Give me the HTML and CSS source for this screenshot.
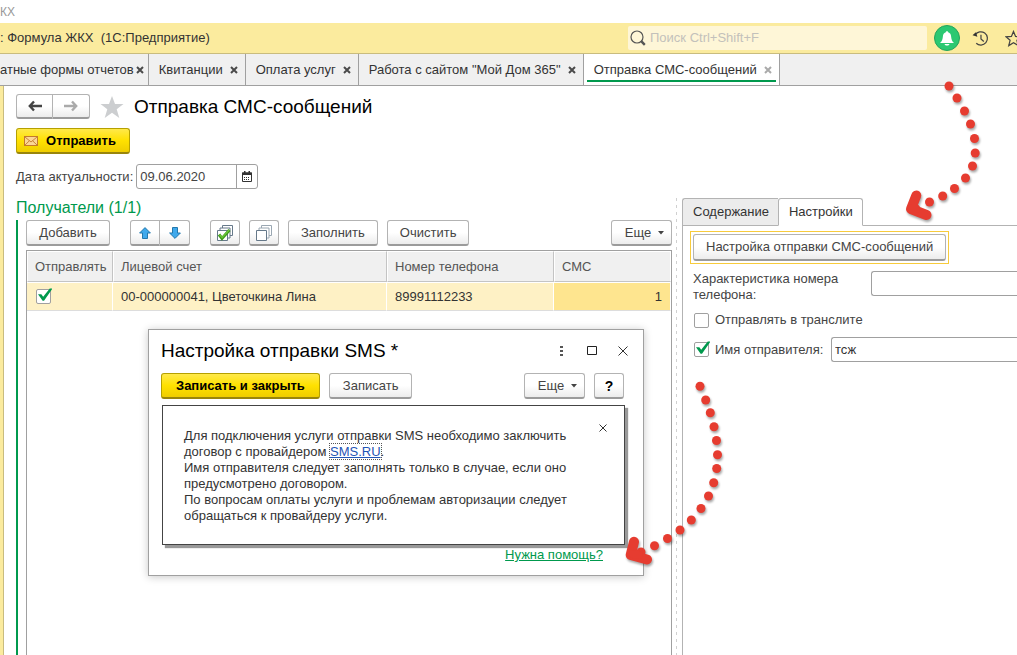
FILE: index.html
```html
<!DOCTYPE html>
<html lang="ru">
<head>
<meta charset="utf-8">
<title>Отправка СМС-сообщений</title>
<link rel="stylesheet" href="styles.css">
</head>
<body>
<svg class="defs" aria-hidden="true">
  <symbol id="cross" viewBox="0 0 8 8"><path d="M1 1l6 6M7 1l-6 6" fill="none" stroke="currentColor" stroke-width="2"/></symbol>
  <symbol id="caret" viewBox="0 0 6 4"><path d="M0 0h6L3 3.4z" fill="currentColor"/></symbol>
</svg>

<div class="window-title"><span>КХ</span></div>

<header class="appbar">
  <span class="app-name">: Формула ЖКХ&nbsp; (1С:Предприятие)</span>
  <label class="search">
    <svg class="search-icon" viewBox="0 0 16 16" fill="none" stroke="#555"><circle cx="7" cy="7" r="6" stroke-width="1.2"/><path d="M11.2 11.2l3.6 3.6" stroke-width="2.4"/></svg>
    <input type="search" placeholder="Поиск Ctrl+Shift+F" aria-label="Поиск">
  </label>
  <button class="round bell" aria-label="Уведомления">
    <svg viewBox="0 0 26 26"><circle cx="13" cy="13" r="12.5" fill="#2bc871" stroke="#23a35c"/><path d="M13 6.200c.8 0 1.200.5 1.200 1.100 2 .6 2.700 2.200 2.900 4.200.3 3.200.9 4.700 2.900 6.500H6c2-1.800 2.600-3.300 2.900-6.500.2-2 .9-3.600 2.900-4.200 0-.6.4-1.100 1.200-1.100zM10.500 19h5c-.4 1-1.300 1.600-2.500 1.600s-2.100-.6-2.500-1.600z" fill="#fff"/></svg>
  </button>
  <button class="round history" aria-label="История">
    <svg viewBox="0 0 18 18" fill="none" stroke="#444" stroke-width="1.300"><path d="M3.400 5.200A7 7 0 1 1 4.500 14M9.500 5v4.500l3 2.600"/><path d="M.6 5.500l5.200 1.600L4 2.500z" fill="#333" stroke="none"/></svg>
  </button>
  <button class="round favorites" aria-label="Избранное">
    <svg viewBox="0 0 18 18" fill="none" stroke="#444" stroke-width="1.300"><path d="M9 1.500l2.200 5.300 5.800.4-4.400 3.700 1.400 5.600L9 13.400l-5 3.100 1.400-5.600L1 7.200l5.800-.4z"/></svg>
  </button>
</header>

<nav class="tabs">
  <div class="tab first"><a href="#">атные формы отчетов</a><button aria-label="Закрыть"><svg><use href="#cross"/></svg></button></div>
  <div class="tab"><a href="#">Квитанции</a><button aria-label="Закрыть"><svg><use href="#cross"/></svg></button></div>
  <div class="tab"><a href="#">Оплата услуг</a><button aria-label="Закрыть"><svg><use href="#cross"/></svg></button></div>
  <div class="tab"><a href="#">Работа с сайтом "Мой Дом 365"</a><button aria-label="Закрыть"><svg><use href="#cross"/></svg></button></div>
  <div class="tab active"><a href="#">Отправка СМС-сообщений</a><button aria-label="Закрыть"><svg><use href="#cross"/></svg></button></div>
</nav>

<main class="form">
  <div class="form-head">
    <div class="joined nav-buttons">
      <button class="btn" aria-label="Назад"><svg viewBox="0 0 14 12"><path d="M6 1.500L1.800 6 6 10.500M2 6h12" fill="none" stroke="#444" stroke-width="2.400"/></svg></button>
      <button class="btn" aria-label="Вперед"><svg viewBox="0 0 14 12"><path d="M8 1.500l4.200 4.500L8 10.500M12 6H0" fill="none" stroke="#aaa" stroke-width="2.400"/></svg></button>
    </div>
    <svg class="star" viewBox="0 0 24 22"><path d="M12 0l3 8h8.500l-6.800 5.200L19.300 22 12 16.700 4.700 22l2.600-8.800L.5 8H9z" fill="#ccced0"/></svg>
    <h1>Отправка СМС-сообщений</h1>
  </div>

  <button class="btn primary send">
    <svg viewBox="0 0 14 10"><rect x=".5" y=".5" width="13" height="9" fill="#fbd695" stroke="#c47a2c"/><path d="M1 1l6 5 6-5M1 9l4.500-4.300M13 9L8.500 4.700" fill="none" stroke="#c98539"/></svg>
    Отправить
  </button>

  <div class="date-row">
    <label for="date">Дата актуальности:</label>
    <div class="date-box">
      <input id="date" type="text" value="09.06.2020">
      <button aria-label="Выбрать дату"><svg viewBox="0 0 10 11"><path d="M.5 2h9v8.500h-9z" fill="#fff" stroke="#333"/><path d="M0 1.500h10V4H0zM2 0h1.500v2H2zM6.500 0H8v2H6.500z" fill="#333"/><path d="M2 6.500h6M2 8.500h6" stroke="#333" stroke-dasharray="1 1"/></svg></button>
    </div>
  </div>

  <div class="split">
    <section class="recipients">
      <h2>Получатели (1/1)</h2>
      <div class="group">
        <div class="toolbar">
          <button class="btn add">Добавить</button>
          <div class="joined move">
            <button class="btn" aria-label="Вверх"><svg viewBox="0 0 12 12"><path d="M6 .6L11.400 6H8.500v5.500h-5V6H.6z" fill="#3fa9ec" stroke="#2378ad"/></svg></button>
            <button class="btn" aria-label="Вниз"><svg viewBox="0 0 12 12"><path d="M6 11.400L.6 6h2.900V.5h5V6h2.900z" fill="#3fa9ec" stroke="#2378ad"/></svg></button>
          </div>
          <button class="btn square check-all" aria-label="Отметить все"><svg viewBox="0 0 16 16"><g fill="#fff" stroke="#66798a"><path d="M5.500.5h10v10h-10z"/><path d="M3 3h10v10H3z"/><path d="M.5 5.500h10v10H.5z"/></g><path d="M2 9.500l3 4L12.500 5" fill="none" stroke="#3f9a1b" stroke-width="3"/><path d="M2.500 9.700l2.600 3L12 5" fill="none" stroke="#6cc93a" stroke-width="1.200"/></svg></button>
          <button class="btn square" aria-label="Снять отметки"><svg viewBox="0 0 16 16"><g fill="#fff" stroke="#66798a"><path d="M5.500.5h10v10h-10z" stroke="#9aa7b2"/><path d="M3 3h10v10H3z" stroke="#9aa7b2"/><path d="M.5 5.500h10v10H.5z"/></g></svg></button>
          <button class="btn">Заполнить</button>
          <button class="btn">Очистить</button>
          <button class="btn more">Еще <svg><use href="#caret"/></svg></button>
        </div>
        <div class="grid">
          <table>
            <colgroup><col class="c-send"><col class="c-account"><col class="c-phone"><col></colgroup>
            <thead><tr><th>Отправлять</th><th>Лицевой счет</th><th>Номер телефона</th><th>СМС</th></tr></thead>
            <tbody><tr>
              <td><input type="checkbox" checked aria-label="Отправлять"></td>
              <td>00-000000041, Цветочкина Лина</td>
              <td>89991112233</td>
              <td class="num">1</td>
            </tr></tbody>
          </table>
        </div>
      </div>
    </section>

    <div class="splitter"></div>

    <section class="side">
      <div class="side-tabs">
        <button>Содержание</button>
        <button class="current">Настройки</button>
      </div>
      <div class="side-body">
        <div class="focus"><button class="btn">Настройка отправки СМС-сообщений</button></div>
        <div class="field phone-kind">
          <label for="kind">Характеристика номера телефона:</label>
          <input id="kind" type="text">
        </div>
        <label class="check-row"><input type="checkbox">Отправлять в транслите</label>
        <div class="field sender">
          <label class="check-row"><input type="checkbox" checked>Имя отправителя:</label>
          <input type="text" value="тсж" aria-label="Имя отправителя">
        </div>
      </div>
    </section>
  </div>
</main>

<div class="dialog" role="dialog" aria-labelledby="dialog-title">
  <div class="dialog-head">
    <h2 id="dialog-title">Настройка отправки SMS *</h2>
    <button aria-label="Меню"><svg viewBox="0 0 12 12"><path d="M5 1h3v2H5zM5 5h3v2H5zM5 9h3v2H5z" fill="#555"/></svg></button>
    <button aria-label="Развернуть"><svg viewBox="0 0 12 12"><path d="M1.500 1.500h9v8h-9z" fill="none" stroke="#222"/></svg></button>
    <button aria-label="Закрыть окно"><svg viewBox="0 0 12 12"><path d="M1.500 1.500l9 9M10.500 1.500l-9 9" fill="none" stroke="#333"/></svg></button>
  </div>
  <div class="dialog-bar">
    <button class="btn primary">Записать и закрыть</button>
    <button class="btn">Записать</button>
    <button class="btn more">Еще <svg><use href="#caret"/></svg></button>
    <button class="btn help">?</button>
  </div>
  <div class="note">
    <p>Для подключения услуги отправки SMS необходимо заключить<br>договор с провайдером <a href="#">SMS.RU</a>.<br>Имя отправителя следует заполнять только в случае, если оно<br>предусмотрено договором.<br>По вопросам оплаты услуги и проблемам авторизации следует<br>обращаться к провайдеру услуги.</p>
    <button aria-label="Закрыть подсказку"><svg viewBox="0 0 8 8"><path d="M.5.5l7 7M7.500.5l-7 7" fill="none" stroke="#333"/></svg></button>
  </div>
  <a class="help-link" href="#">Нужна помощь?</a>
</div>

<svg class="pointers" viewBox="0 0 1017 655" aria-hidden="true">
  <g class="dots">
    <circle cx="949" cy="86" r="4.500"/><circle cx="957" cy="98" r="4.500"/><circle cx="964.500" cy="111" r="4.500"/><circle cx="970.500" cy="124" r="4.500"/><circle cx="974.500" cy="138.500" r="4.500"/><circle cx="975.200" cy="153" r="4.500"/><circle cx="972.500" cy="166" r="4.500"/><circle cx="965.500" cy="178" r="4.500"/><circle cx="954.500" cy="188.500" r="4.500"/><circle cx="942.700" cy="196" r="4.500"/><circle cx="929.500" cy="202" r="4.500"/>
    <path d="M916.300 195.500L911 209l15.500 6"/><path class="tip" d="M912 208.500l4 0"/>
    <circle cx="700" cy="386.300" r="4.500"/><circle cx="705.700" cy="400" r="4.500"/><circle cx="710.300" cy="412.700" r="4.500"/><circle cx="714" cy="426.700" r="4.500"/><circle cx="716.500" cy="440.500" r="4.500"/><circle cx="717.500" cy="454.700" r="4.500"/><circle cx="716.700" cy="468.500" r="4.500"/><circle cx="713.700" cy="482.700" r="4.500"/><circle cx="708.500" cy="496" r="4.500"/><circle cx="701" cy="508.500" r="4.500"/><circle cx="691.300" cy="520" r="4.500"/><circle cx="680" cy="530" r="4.500"/><circle cx="667.500" cy="538.500" r="4.500"/><circle cx="654.500" cy="545.700" r="4.500"/><circle cx="641" cy="552" r="4.500"/>
    <path d="M634 541.800l-3.300 13.200 16.300 4.500"/><path class="tip" d="M633 554l6 1"/>
  </g>
</svg>
</body>
</html>
```
FILE: styles.css
```css
* { box-sizing: border-box; }

body {
  margin: 0;
  min-height: 100vh;
  display: flex;
  flex-direction: column;
  position: relative;
  overflow: hidden;
  background: #fff;
  color: #333;
  font: 13px/16px "Liberation Sans", Arial, sans-serif;
}

button, input { font: inherit; color: inherit; margin: 0; }
button { padding: 0; border: 0; background: none; }
svg { display: block; flex: none; }
h1, h2, p { margin: 0; font-weight: normal; }
.defs { width: 0; height: 0; position: absolute; }

.window-title {
  height: 23px;
  display: flex;
  align-items: center;
  color: #999;
  font-size: 12px;
}

/* Application bar */
.appbar {
  height: 31px;
  display: flex;
  align-items: center;
  background: #fbeb9e;
  border-bottom: 1px solid #c9bc7e;
  overflow: hidden;
}
.app-name { flex: 1; white-space: nowrap; }
.search {
  width: 299px;
  height: 24px;
  display: flex;
  align-items: center;
  gap: 4px;
  padding-left: 2px;
  background: #fef6d7;
  border-radius: 2px;
}
.search-icon { width: 16px; height: 16px; }
.search input { flex: 1; min-width: 0; border: 0; padding: 0; background: none; outline: 0; }
.search input::placeholder { color: #c3c1bb; opacity: 1; }
.round { flex: none; }
.bell { margin-left: 7px; }
.bell svg { width: 26px; height: 26px; }
.history { margin-left: 12px; }
.favorites { margin: 0 -5px 0 16px; }
.history svg, .favorites svg { width: 17px; height: 17px; }

/* Open windows */
.tabs {
  height: 32px;
  display: flex;
  background: #f0f0f0;
  border-bottom: 1px solid #a0a0a0;
}
.tab {
  display: flex;
  align-items: center;
  gap: 7px;
  padding: 0 7px 0 10px;
  border-right: 1px solid #a0a0a0;
  white-space: nowrap;
}
.tab.first { padding: 0 4px 0 0; gap: 2px; }
.tab a { color: inherit; text-decoration: none; }
.tab svg { width: 8px; height: 8px; color: #4a4a4a; }
.tab.active { background: linear-gradient(#00994d, #00994d) center 26px / calc(100% - 6px) 2px no-repeat #fff; }
.tab.active svg { color: #aaa; }

/* Buttons */
.btn {
  height: 26px;
  padding: 0 13px;
  display: inline-flex;
  align-items: center;
  justify-content: center;
  border: 1px solid #b3b3b3;
  border-bottom: 2px solid #9b9b9b;
  border-radius: 3px;
  background: linear-gradient(#fff 50%, #ececec);
  color: #444;
  white-space: nowrap;
}
.btn.primary {
  border-color: #b5a000;
  border-bottom-color: #99850c;
  background: linear-gradient(#ffe94a, #ffe100 50%, #efcd00);
  color: #000;
  font-weight: bold;
}
.btn.more { width: 61px; gap: 7px; padding: 0 0 0 6px; }
.btn.more svg { width: 6px; height: 4px; }
.joined { display: flex; }
.joined .btn { padding: 0; }
.joined .btn:first-child { border-radius: 3px 0 0 3px; }
.joined .btn:last-child { border-left: 0; border-radius: 0 3px 3px 0; }

/* Form */
.form {
  flex: 1;
  display: flex;
  flex-direction: column;
  align-items: flex-start;
  border-left: 3px solid #fbeb9e;
  box-shadow: inset 1px 0 #c9bc7e;
  padding: 8px 0 0 13px;
}
.form-head { display: flex; align-items: center; height: 25px; }
.nav-buttons .btn { width: 37px; height: 25px; }
.nav-buttons svg { width: 14px; height: 12px; }
.star { width: 24px; height: 22px; margin: 0 10px 0 10px; }
h1 { font-size: 19px; line-height: 24px; color: #000; }
.send { width: 114px; margin-top: 9px; gap: 8px; padding: 0 6px 0 0; }
.send svg { width: 14px; height: 10px; }
.date-row { display: flex; align-items: center; gap: 3px; margin-top: 10px; color: #444; }
.date-box {
  width: 122px;
  height: 25px;
  display: flex;
  border: 1px solid #a0a0a0;
  border-radius: 3px;
}
.date-box input { flex: 1; min-width: 0; border: 0; padding: 0 3px; background: none; }
.date-box button {
  width: 21px;
  display: flex;
  align-items: center;
  justify-content: center;
  border-left: 1px solid #a0a0a0;
}
.date-box svg { width: 10px; height: 11px; }

.split { flex: 1; align-self: stretch; display: flex; margin-top: 9px; }
.recipients { flex: 1; min-width: 0; display: flex; flex-direction: column; }
.recipients h2 { font-size: 16px; line-height: 20px; color: #00994d; margin-bottom: 2px; }
.group {
  flex: 1;
  display: flex;
  flex-direction: column;
  border-left: 2px solid #00994d;
  padding-left: 8px;
}
.toolbar { display: flex; }
.toolbar .btn { padding: 0 12px; }
.toolbar .btn + .btn { margin-left: 9px; }
.toolbar .add { width: 84px; }
.toolbar .move { margin: 0 20px; }
.toolbar .move .btn { width: 30px; padding: 0; }
.toolbar .move .btn + .btn { margin-left: 0; }
.move svg { width: 12px; height: 12px; }
.toolbar .square { width: 30px; padding: 0; }
.square svg { width: 16px; height: 16px; }
.toolbar .btn.more { margin-left: auto; padding: 0 0 0 6px; }
.dialog-bar .more { margin-left: auto; }

.grid { flex: 1; margin-top: 4px; border: 1px solid #a0a0a0; border-bottom: 0; }
table { width: 100%; table-layout: fixed; border-collapse: separate; border-spacing: 0; }
.c-send { width: 86px; }
.c-account { width: 274px; }
.c-phone { width: 167px; }
th {
  height: 31px;
  padding: 0 7px;
  text-align: left;
  font-weight: normal;
  color: #555;
  background: #f0f0f0;
  border: 1px solid #fff;
  border-right-color: #c4c4c4;
  border-bottom-color: #c4c4c4;
}
th:last-child { border-right-color: #fff; }
td {
  height: 29px;
  padding: 0 8px;
  background: #fef1c5;
  border: 1px solid #fff;
  border-width: 1px 1px 1px 0;
  border-bottom-color: #ddd;
}
td:first-child { padding-left: 9px; }
td.num { background: #fee58f; text-align: right; }

input[type="checkbox"] {
  appearance: none;
  width: 15px;
  height: 15px;
  flex: none;
  display: block;
  border: 1px solid #a0a0a0;
  border-radius: 2px;
  background: #fff;
}
input[type="checkbox"]:checked::before {
  content: "";
  display: block;
  width: 14px;
  height: 13px;
  margin: -2px 0 0 1px;
  background: #00994d;
  clip-path: polygon(0 48%, 24% 48%, 37% 67%, 84% 4%, 100% 4%, 100% 10%, 43% 98%, 33% 98%);
}

.splitter { width: 10px; background: repeating-linear-gradient(#d0d0d0 0 3px, transparent 3px 7px) 4px 0 / 1px 100% no-repeat; }

/* Settings pane */
.side { flex: 0 0 335px; min-width: 0; display: flex; flex-direction: column; }
.side-tabs { height: 28px; display: flex; border-bottom: 1px solid #b3b3b3; }
.side-tabs button {
  height: 28px;
  padding: 0 9px 0 10px;
  background: #ececec;
  border: 1px solid #b3b3b3;
  border-right: 0;
  border-radius: 3px 0 0 0;
}
.side-tabs .current {
  background: #fff;
  border-right: 1px solid #b3b3b3;
  border-bottom-color: #fff;
  border-radius: 3px 3px 0 0;
}
.side-body {
  flex: 1;
  display: flex;
  flex-direction: column;
  align-items: flex-start;
  border-left: 1px solid #b3b3b3;
  padding: 5px 0 0 7px;
  color: #444;
}
.focus { border: 1px solid #f7cb3c; padding: 2px; }
.focus .btn { display: flex; height: 27px; padding: 0 12px; }
.field { display: flex; align-self: stretch; padding-left: 3px; }
.field > input {
  flex: 1;
  width: 0;
  min-width: 0;
  height: 25px;
  padding: 0 3px;
  border: 1px solid #a0a0a0;
  border-right: 0;
  border-radius: 3px 0 0 3px;
  background: #fff;
  color: #333;
}
.phone-kind { margin-top: 7px; }
.phone-kind label { width: 178px; padding-right: 20px; }
.check-row { display: flex; align-items: center; gap: 6px; }
.side-body > .check-row { margin: 9px 0 9px 4px; }
.sender { padding-left: 4px; }
.sender .check-row { width: 137px; }

/* Floating settings window */
.dialog {
  position: absolute;
  left: 148px;
  top: 329px;
  width: 496px;
  min-height: 247px;
  padding: 8px 18px 11px 12px;
  display: flex;
  flex-direction: column;
  background: #fff;
  border: 1px solid #a0a0a0;
  box-shadow: 0 1px 8px rgba(0, 0, 0, .22);
}
.dialog-head { display: flex; align-items: center; gap: 19px; height: 25px; margin-right: -4px; }
.dialog-head h2 { flex: 1; font-size: 19px; color: #000; }
.dialog-head svg { width: 12px; height: 12px; }
.dialog-bar { display: flex; gap: 9px; margin: 10px 1px 0 0; }
.dialog-bar .btn { padding: 0 13px; }
.dialog-bar .primary { padding: 0 14px; }
.dialog-bar .btn.more { padding: 0 0 0 6px; }
.dialog-bar .help { width: 30px; padding: 0; font-size: 14px; font-weight: bold; color: #000; }
.note {
  display: flex;
  justify-content: space-between;
  align-items: flex-start;
  margin: 6px 0 0 1px;
  padding: 22px 17px 20px 21px;
  background: #fff;
  border: 1px solid #444;
  box-shadow: 3px 3px 1px #999;
}
.note p { white-space: nowrap; }
.note a { color: #1f55b5; outline: 1px dotted #555; }
.note button { margin: -4px 0 0; }
.note svg { width: 8px; height: 8px; }
.help-link { align-self: flex-end; margin: 2px 22px 0 0; color: #00994d; }

/* Dotted arrows drawn over the window */
.pointers { position: absolute; left: 0; top: 0; width: 1017px; height: 655px; pointer-events: none; }
.dots { fill: #e63c30; filter: drop-shadow(1px 2px 1px rgba(0, 0, 0, .35)); }
.dots path { fill: none; stroke: #e63c30; stroke-width: 10; stroke-linecap: round; stroke-linejoin: round; }
.dots .tip { stroke-width: 8; }
```
